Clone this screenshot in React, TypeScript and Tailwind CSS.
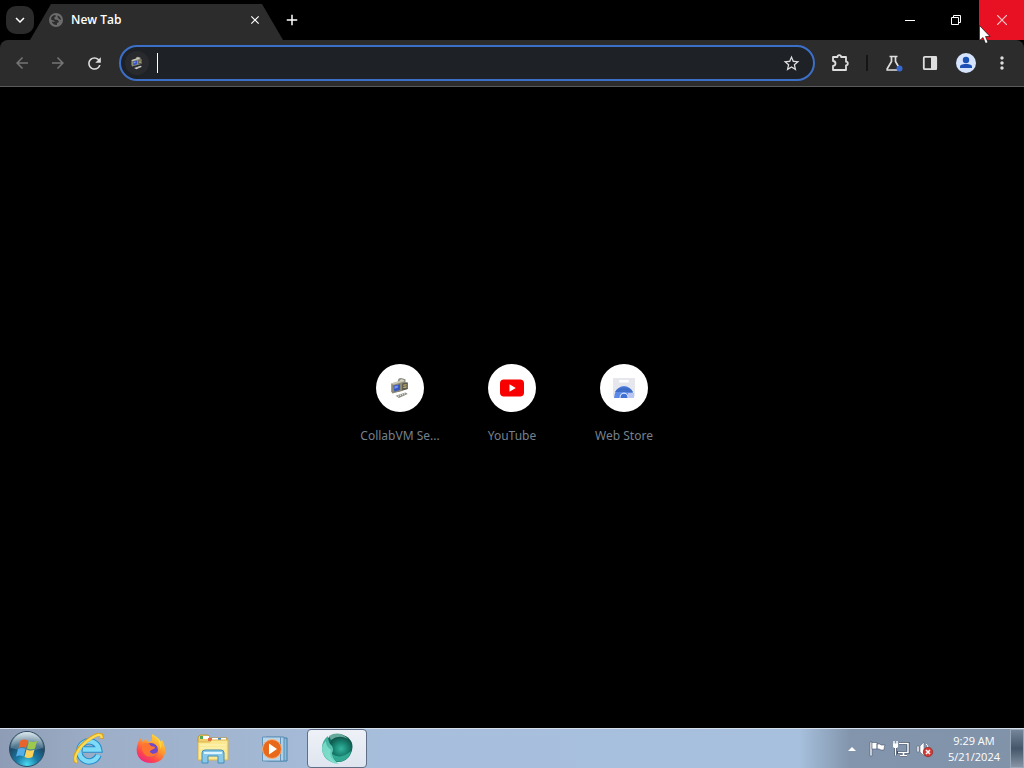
import { MdArrowBack, MdArrowForward, MdRefresh, MdStarBorder, MdMoreVert, MdClose, MdAdd, MdKeyboardArrowDown } from 'react-icons/md';

function CollabIcon({ size, dark }: { size: number; dark?: boolean }) {
  return (
    <svg width={size} height={size} viewBox="0 0 20 20" aria-hidden="true">
      <path d="M8 4q0-3 3-3l4 1v9l-4 2-3-2z" fill="#8d8f83" />
      <path d="M9 4l2-2 3 1-2 1z" fill="#e6e5da" />
      <path d="M2 6l9-2 6 1v6l-6 2-8 2-1-2z" fill="#8b8974" />
      <path d="M2 6l2-1 8-2 2 1-10 3z" fill="#c9c7b3" />
      <path d="M4 8l6-1.500v5L5 13.500z" fill="#3556c4" />
      <path d="M5 8.500l3-.8v2l-3 1z" fill="#7d95e6" />
      <path d="M12 6l5-1v6l-5 1z" fill="#54564f" />
      <path d="M13 7.500l3-.5M13 9.500l3-.5" stroke="#d9c375" />
      <path d="M6 17l9-3 2 1.500-8 3.500z" fill={dark ? '#d8d9d4' : '#8e9088'} />
      <path d="M8 17.500l7-2.500" stroke={dark ? '#777' : '#e8e8df'} strokeDasharray="1 1" />
    </svg>
  );
}

function GlobeIcon() {
  return (
    <svg width="14" height="14" viewBox="0 0 14 14" aria-hidden="true">
      <circle cx="7" cy="7" r="7" fill="#6c6c6c" />
      <path d="M2 6.500Q2 2.500 6 2l1 1-2 2 1 1.500 3 .5 1 2-2 1v2q-4 0-5.500-3.500l3 .5V8L3 7z" fill="#2d2d2d" />
      <path d="M8.500 2.500Q12 4 12 7l-2-1-1.500-2z" fill="#2d2d2d" />
    </svg>
  );
}

function PuzzleIcon() {
  return (
    <svg width="20" height="20" viewBox="0 0 20 20" fill="none" stroke="currentColor" strokeWidth="1.800" strokeLinejoin="round" aria-hidden="true">
      <path d="M3 4h4.500a1.800 1.800 0 0 1 3.600 0h4.900v4.700a1.800 1.800 0 0 1 0 3.600V17H3v-4q2.500-.3 2.500-2.500T3 8z" />
    </svg>
  );
}

function FlaskIcon() {
  return (
    <svg width="20" height="20" viewBox="0 0 20 20" aria-hidden="true">
      <path d="M5.500 3.500h8M7.500 3.500v5L3.200 15.700V17h12.600v-1.300L11.500 8.500v-5" fill="none" stroke="#dedede" strokeWidth="1.700" />
      <circle cx="15.500" cy="15.500" r="3" fill="#3569d0" />
    </svg>
  );
}

function PanelIcon() {
  return (
    <svg width="16" height="16" viewBox="0 0 16 16" aria-hidden="true">
      <rect x="1.800" y="1.800" width="12.400" height="12.400" rx="1" fill="none" stroke="#dedede" strokeWidth="1.800" />
      <path d="M9 1h5l1 1v12l-1 1H9z" fill="#dedede" />
    </svg>
  );
}

function AvatarIcon() {
  return (
    <svg width="20" height="20" viewBox="0 0 20 20" aria-hidden="true">
      <circle cx="10" cy="10" r="10" fill="#d5e3fc" />
      <circle cx="10" cy="7" r="3.200" fill="#1b51b5" />
      <path d="M4 15v-1.500C4 11.500 8 11 10 11s6 .5 6 2.500V15z" fill="#1b51b5" />
    </svg>
  );
}

function YouTubeIcon() {
  return (
    <svg width="24" height="24" viewBox="0 0 24 24" aria-hidden="true">
      <rect y="3.500" width="24" height="17" rx="4" fill="#f80000" />
      <path d="M9.500 8.300l6.300 3.700-6.300 3.700z" fill="#fff" />
    </svg>
  );
}

function StoreIcon() {
  return (
    <svg width="24" height="24" viewBox="0 0 24 24" aria-hidden="true">
      <path d="M1 2h22v18l-2 2H3l-2-2z" fill="#e5e7ed" />
      <rect x="7" y="4" width="10" height="2.500" rx="1.200" fill="#fff" />
      <path d="M2 22a10 12 0 0 1 20 0z" fill="#5c8ae8" />
      <path d="M3 16a9.500 7 0 0 1 18 0z" fill="#3f6ec8" />
      <path d="M16 17h6v5h-6z" fill="#b9c5f2" />
      <path d="M7.500 22a4.500 5.500 0 0 1 9 0z" fill="#dce6ff" />
      <path d="M8.500 22a3.500 4.300 0 0 1 7 0z" fill="#3f70d6" />
    </svg>
  );
}

function StartOrb() {
  return (
    <svg width="38" height="38" viewBox="0 0 38 38" aria-hidden="true">
      <defs>
        <radialGradient id="orb" cx=".5" cy=".95" r=".9">
          <stop offset="0" stopColor="#4bdcf2" />
          <stop offset=".35" stopColor="#1a7aa6" />
          <stop offset=".7" stopColor="#1d4a68" />
          <stop offset="1" stopColor="#8faab9" />
        </radialGradient>
        <linearGradient id="gloss" x2="0" y2="1">
          <stop stopColor="#eaf3f6" stopOpacity=".8" />
          <stop offset="1" stopColor="#8ca9b8" stopOpacity=".3" />
        </linearGradient>
      </defs>
      <circle cx="19" cy="19" r="17.500" fill="url(#orb)" stroke="#2f4d62" />
      <path d="M3 18a16 16 0 0 1 32 0q-16 5-32 0z" fill="url(#gloss)" />
      <path d="M12.500 10.500q4-2 7.500 0l-2 7.500q-3.500-2-7.500 0z" fill="#e8642c" />
      <path d="M21 11q4 2 8 0l-2 7.500q-4 2-8 0z" fill="#9cc94b" />
      <path d="M10 19q4-2 7.500 0l-2 7.500q-3.500-2-7.500 0z" fill="#54aee8" />
      <path d="M18.500 19.500q4 2 8 0l-2 7.500q-4 2-8 0z" fill="#fbd35b" />
    </svg>
  );
}

function IeIcon() {
  return (
    <svg width="32" height="32" viewBox="0 0 32 32" fill="none" aria-hidden="true">
      <path d="M25.500 22A10 10 0 1 1 26 16.500H10" stroke="#238dcc" strokeWidth="6.500" />
      <path d="M25.500 22A10 10 0 1 1 26 16.500H10" stroke="#7fdaf8" strokeWidth="4.500" />
      <path d="M4 29.500C-2 26 5 14 15 7S30-1 29 6" stroke="#dc9f20" strokeWidth="3.500" />
      <path d="M4 29C-1 26 6 14 15 7.500S29 0 28.500 5" stroke="#fbdc55" strokeWidth="2.300" />
    </svg>
  );
}

function FirefoxIcon() {
  return (
    <svg width="32" height="32" viewBox="0 0 32 32" aria-hidden="true">
      <defs>
        <linearGradient id="fox" x1=".85" y1="0" x2=".2" y2="1">
          <stop stopColor="#ffe846" />
          <stop offset=".45" stopColor="#ff922e" />
          <stop offset=".75" stopColor="#ff454d" />
          <stop offset="1" stopColor="#e7258b" />
        </linearGradient>
      </defs>
      <path d="M3 10l2-5 3 4 3-4 1 4 5-1V1c4 2 7 5 8 8l2-2c6 10 4 23-11 23C4 30-1 20 3 10z" fill="url(#fox)" />
      <circle cx="16" cy="17" r="7" fill="#7048c9" />
      <path d="M8 11c3-2 6-1 8 2l4 1c0 3-5 2-5 5 2 3 6 2 8-1-1 6-9 8-14 3-2-3-3-7-1-10z" fill="#ff7431" />
      <path d="M17 2c5 3 8 7 8 14 2-2 2-5 1-7-2-4-5-6-9-7z" fill="#ffd43c" />
    </svg>
  );
}

function ExplorerIcon() {
  return (
    <svg width="34" height="32" viewBox="0 0 34 32" aria-hidden="true">
      <path d="M2 4l2-2h8l2 3h17v21H2z" fill="#f1ce68" stroke="#bd963a" />
      <path d="M4 3h3v3H4z" fill="#4ea956" />
      <path d="M7 3h6v3H7z" fill="#fff" />
      <path d="M12 5h4v3h-4z" fill="#e16a45" />
      <path d="M16 5h6v3h-6z" fill="#fff" />
      <path d="M22 5h3v3h-3z" fill="#4188cf" />
      <path d="M25 5h5v3h-5z" fill="#fff" />
      <path d="M2 9h12l2-2h16v20H2z" fill="#fae992" stroke="#dcb34e" />
      <path d="M4 12h26M4 15h26" stroke="#fff6bd" />
      <path d="M6 30V20q0-3 3-3h16q3 0 3 3v10h-6v-7H12v7z" fill="#88c9e9" stroke="#458eb7" />
      <path d="M8 20h18" stroke="#dcf5ff" strokeWidth="2" />
    </svg>
  );
}

function MediaIcon() {
  return (
    <svg width="28" height="28" viewBox="0 0 28 28" aria-hidden="true">
      <path d="M8 3h18v23H8z" fill="#8fbad9" stroke="#477fa8" />
      <path d="M5 2h18v24H5z" fill="#abd0e8" stroke="#568eb4" />
      <path d="M1.500 2h18v24h-18z" fill="#b8d5ec" stroke="#6694b9" />
      <circle cx="11" cy="14" r="9.500" fill="#e8681c" stroke="#f5b27b" />
      <path d="M8 8.500l8 5.500-8 5.500z" fill="#fff" />
    </svg>
  );
}

function TealIcon() {
  return (
    <svg width="34" height="34" viewBox="0 0 34 34" aria-hidden="true">
      <defs>
        <radialGradient id="ball" cx=".5" cy=".6" r=".6">
          <stop stopColor="#35b59e" />
          <stop offset=".5" stopColor="#188472" />
          <stop offset="1" stopColor="#0c4a41" />
        </radialGradient>
        <linearGradient id="crescent" x2="1" y2="1">
          <stop stopColor="#2fa48f" />
          <stop offset="1" stopColor="#7ce3d0" />
        </linearGradient>
      </defs>
      <circle cx="18" cy="16" r="14" fill="#17695c" />
      <ellipse cx="21" cy="14.500" rx="11.500" ry="11" fill="url(#ball)" />
      <path d="M8 4C-1 11 0 25 11 30q4 2 8 2-6-4-7-11 2-3 0-7-4-3-4-10z" fill="url(#crescent)" />
      <path d="M6 9q0 6 5 9-3 7 5 13Q3 27 2 17q0-5 4-8z" fill="#8fe5d5" fillOpacity=".7" />
      <path d="M12 22q9 6 19-3-1 7-8 10-4 1-7 0-3-3-4-7z" fill="#30a892" />
      <path d="M9 4q10-6 19 3-9-5-17 1z" fill="#65a99d" />
    </svg>
  );
}

function TrayFlag() {
  return (
    <svg width="18" height="18" viewBox="0 0 18 18" aria-hidden="true">
      <path d="M2 2h2v14H2z" fill="#fff" stroke="#46566e" strokeWidth=".6" />
      <path d="M4 2.500h5V9H4zM9 4h3l1 1h4q-1 2-1 5h-3l-2-1H9z" fill="#fff" stroke="#46566e" strokeWidth=".6" />
    </svg>
  );
}

function TrayNetwork() {
  return (
    <svg width="18" height="18" viewBox="0 0 18 18" fill="none" aria-hidden="true">
      <path d="M7 3.500h9v9H5M8 15.500h7M11.500 13v2M3.500 7v8.500" stroke="#3c4d64" strokeWidth="3" />
      <path d="M7 3.500h9v9H6M8 15.500h7M11.500 13v2" stroke="#fff" strokeWidth="1.500" />
      <path d="M2 1v3M5 1v3M3.500 7v8.500" stroke="#fff" strokeWidth="1.400" />
      <path d="M1 3.500h5v3L5 8H2L1 6.500z" fill="#fff" />
    </svg>
  );
}

function TrayVolume() {
  return (
    <svg width="18" height="18" viewBox="0 0 18 18" aria-hidden="true">
      <path d="M1 6h2v6H1zM4 6l4-4v14l-4-4z" fill="#fff" stroke="#5b6a80" strokeWidth=".6" />
      <path d="M10 4q2 1 2 4" fill="none" stroke="#fff" />
      <circle cx="12" cy="12" r="4.700" fill="#d33b36" stroke="#942722" strokeWidth=".7" />
      <path d="M10 10l4 4m0-4l-4 4" stroke="#fff" strokeWidth="1.500" />
    </svg>
  );
}

const iconButton = 'flex size-7 shrink-0 items-center justify-center rounded-full text-[#dedede]';
const taskButton = 'flex h-full w-[60px] items-center justify-center';

const shortcuts = [
  { label: 'CollabVM Se...', icon: <CollabIcon size={22} /> },
  { label: 'YouTube', icon: <YouTubeIcon /> },
  { label: 'Web Store', icon: <StoreIcon /> },
];

export default function App() {
  return (
    <div className="flex min-h-screen flex-col bg-black font-['Noto_Sans','Open_Sans',sans-serif]">
      <header>
        <div className="relative flex h-10 items-stretch">
          <button aria-label="Search tabs" className="ml-1.5 flex size-7 items-center justify-center self-center rounded-[10px] bg-[#2b2b2b] text-white">
            <MdKeyboardArrowDown size={18} />
          </button>
          <div className="-ml-1 mt-1 flex w-[253px] items-center bg-[#2c2c2c] pb-1 pl-[19px] pr-5 [clip-path:polygon(21px_0,232px_0,253px_100%,0_100%)]">
            <GlobeIcon />
            <span className="ml-2 flex-1 font-['Open_Sans',sans-serif] text-xs font-semibold text-white">New Tab</span>
            <button aria-label="Close tab" className="flex size-4 items-center justify-center text-white">
              <MdClose size={14} />
            </button>
          </div>
          <button aria-label="New tab" className="flex w-[18px] items-center justify-center text-white">
            <MdAdd size={18} />
          </button>
          <div className="ml-auto flex text-white">
            <button aria-label="Minimize" className="flex w-[46px] items-center justify-center">
              <svg width="10" height="10" aria-hidden="true"><path d="M0 5.500h10" stroke="currentColor" /></svg>
            </button>
            <button aria-label="Restore" className="flex w-[46px] items-center justify-center">
              <svg width="10" height="10" fill="none" stroke="currentColor" aria-hidden="true"><path d="M.5 2.500h7v7h-7zM2.500 2.500v-2h7v7h-2" /></svg>
            </button>
            <button aria-label="Close window" className="flex w-[45px] items-center justify-center bg-[#e81123] text-[#f9c9cd]">
              <svg width="10" height="10" stroke="currentColor" strokeWidth="1.200" aria-hidden="true"><path d="M0 0l10 10M10 0L0 10" /></svg>
            </button>
          </div>
          <svg className="absolute right-8 top-6" width="14" height="22" viewBox="0 0 14 22" aria-hidden="true">
            <path d="M1.500 1.500v15l3.500-3 2.500 6 2.500-1-2.500-6H12z" fill="#fff" stroke="#000" strokeWidth=".6" />
          </svg>
        </div>

        <div className="flex h-[47px] items-center rounded-t-lg border-b border-[#5a5a5a] bg-[#2c2c2c] px-2">
          <nav className="flex gap-2" aria-label="Page navigation">
            <button aria-label="Back" className={iconButton}><MdArrowBack size={18} color="#757575" /></button>
            <button aria-label="Forward" className={iconButton}><MdArrowForward size={18} color="#757575" /></button>
            <button aria-label="Reload" className={iconButton}><MdRefresh size={19} /></button>
          </nav>
          <div className="mx-[11px] flex h-9 min-w-0 flex-1 items-center rounded-full border-2 border-[#3c70c8] bg-[#1e2126] pl-1 pr-2">
            <span className="flex size-6 items-center justify-center rounded-full bg-[#292a2d]"><CollabIcon size={14} dark /></span>
            <span className="ml-2 h-5 w-px bg-white" />
            <input aria-label="Address and search bar" className="min-w-0 flex-1 bg-transparent text-sm text-white outline-none" />
            <button aria-label="Bookmark this tab" className="flex size-7 items-center justify-center text-[#dedede]"><MdStarBorder size={19} /></button>
          </div>
          <button aria-label="Extensions" className={iconButton}><PuzzleIcon /></button>
          <span className="mx-3 h-4 w-0.5 bg-[#151515]" />
          <div className="flex gap-2">
            <button aria-label="Experiments" className={iconButton}><FlaskIcon /></button>
            <button aria-label="Side panel" className={iconButton}><PanelIcon /></button>
            <button aria-label="Profile" className={iconButton}><AvatarIcon /></button>
            <button aria-label="Menu" className={iconButton}><MdMoreVert size={20} /></button>
          </div>
        </div>
      </header>

      <main className="flex flex-1 items-center justify-center pb-2">
        <div className="flex">
          {shortcuts.map((s) => (
            <a key={s.label} href="#" className="flex w-28 flex-col items-center gap-4 text-[#76818d]">
              <span className="flex size-12 items-center justify-center rounded-full bg-white">{s.icon}</span>
              <span className="whitespace-nowrap text-xs leading-4">{s.label}</span>
            </a>
          ))}
        </div>
      </main>

      <footer className="flex h-10 items-stretch border-t border-[#d4dfeb] bg-[linear-gradient(90deg,#8e9db5_0%,#9daec8_10%,#a7bfdc_38%,#a7c0dd_78%,#8295ac_83%,#8193a9_100%)]">
        <button aria-label="Start" className="flex w-[54px] items-center justify-center"><StartOrb /></button>
        <nav className="ml-[5px] flex gap-0.5" aria-label="Taskbar">
          <button aria-label="Internet Explorer" className={taskButton}><IeIcon /></button>
          <button aria-label="Firefox" className={taskButton}><FirefoxIcon /></button>
          <button aria-label="Windows Explorer" className={taskButton}><ExplorerIcon /></button>
          <button aria-label="Media Player" className={taskButton}><MediaIcon /></button>
          <button aria-label="Browser" className={`${taskButton} rounded-sm border border-[#5f6f88] bg-linear-to-b from-[#eef1f7] to-[#dfe5ef]`}><TealIcon /></button>
        </nav>
        <div className="ml-auto flex items-center gap-1.5">
          <button aria-label="Show hidden icons" className="flex size-5 items-center justify-center">
            <svg width="8" height="5" aria-hidden="true"><path d="M0 5l4-4 4 4z" fill="#fff" /></svg>
          </button>
          <button aria-label="Action Center"><TrayFlag /></button>
          <button aria-label="Network"><TrayNetwork /></button>
          <button aria-label="Volume"><TrayVolume /></button>
          <time className="ml-2 text-center font-['Open_Sans',sans-serif] text-[11px] leading-4 text-white">
            <span className="block">9:29 AM</span>
            <span className="block">5/21/2024</span>
          </time>
          <button aria-label="Show desktop" className="ml-1 w-3.5 self-stretch border border-[#9ba8b9] bg-linear-to-b from-[#76869a] via-[#46566a] to-[#8594a6]" />
        </div>
      </footer>
    </div>
  );
}
